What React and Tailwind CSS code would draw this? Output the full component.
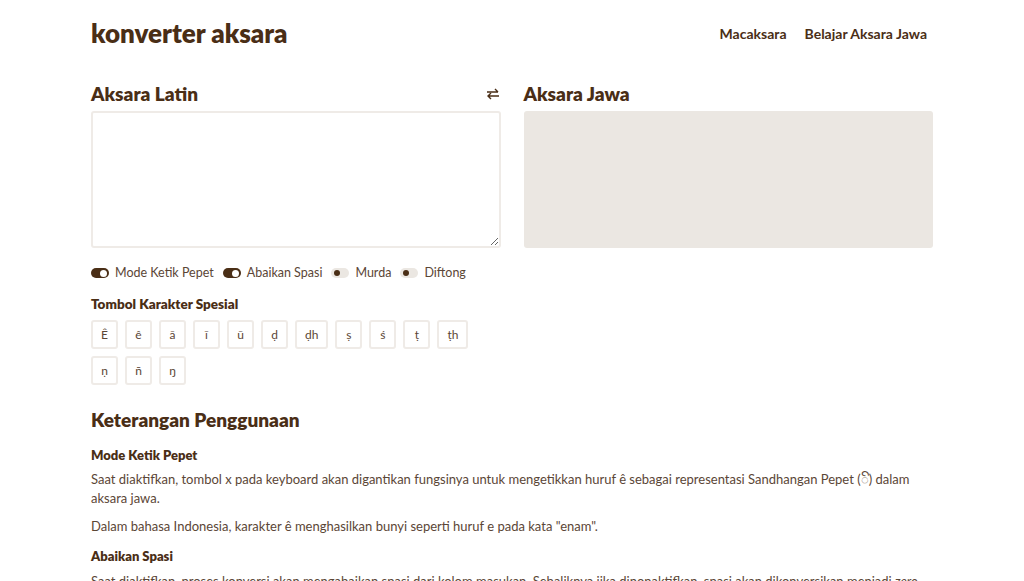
import { useState } from 'react';

const chars1 = ['Ê', 'ê', 'ā', 'ī', 'ū', 'ḍ', 'ḍh', 'ṣ', 'ś', 'ṭ', 'ṭh'];
const chars2 = ['ṇ', 'ñ', 'ŋ'];

function Toggle({ on, label }) {
    return (
        <label className="flex items-center gap-[6px] text-[12.5px] text-[#5b4636]">
            {on ? (
                <span className="w-[18px] h-[10px] rounded-full bg-[#4a2e16] flex items-center justify-end pr-[2px]">
                    <span className="w-[7px] h-[7px] rounded-full bg-white" />
                </span>
            ) : (
                <span className="w-[18px] h-[10px] rounded-full bg-[#ebe7e2] flex items-center pl-[3px]">
                    <span className="w-[6px] h-[6px] rounded-full bg-[#4a2e16]" />
                </span>
            )}
            {label}
        </label>
    );
}

function CharButton({ c }) {
    return (
        <button className="min-w-[27px] h-[29px] px-[8px] border-2 border-[#efebe7] rounded-[3px] bg-white text-[12px] text-[#5b4636]">
            {c}
        </button>
    );
}

export default function App() {
    const [text, setText] = useState('');

    return (
        <div className="min-h-screen bg-white font-['Lato',sans-serif] text-[#5b4636]">
            <div className="w-[842px] mx-auto">
                <header className="flex items-center justify-between pt-[17px] pb-[33px]">
                    <h1 className="text-[26px] font-extrabold text-[#4a2e16] leading-[32px]">konverter aksara</h1>
                    <nav className="flex gap-[18px] pr-[6px] text-[14px] font-bold text-[#4a2e16]">
                        <a href="#">Macaksara</a>
                        <a href="#">Belajar Aksara Jawa</a>
                    </nav>
                </header>

                <div className="grid grid-cols-2 gap-[23px]">
                    <div>
                        <div className="flex items-end justify-between h-[24px] mb-[5px]">
                            <h2 className="text-[19px] font-extrabold text-[#4a2e16] leading-[24px]">Aksara Latin</h2>
                            <svg width="14" height="12" viewBox="0 0 14 12" className="mr-[1px] mb-[6px] text-[#4a2e16]" fill="none" stroke="currentColor" strokeWidth="1.4">
                                <path d="M1 4h11M9 1l3 3" />
                                <path d="M13 8H2M5 5l-3 3 3 3" />
                            </svg>
                        </div>
                        <textarea
                            value={text}
                            onChange={(e) => setText(e.target.value)}
                            className="block w-full h-[137px] border-2 border-[#efebe7] rounded-[3px] p-2 focus:outline-none"
                        />
                    </div>
                    <div>
                        <div className="flex items-end h-[24px] mb-[5px]">
                            <h2 className="text-[19px] font-extrabold text-[#4a2e16] leading-[24px]">Aksara Jawa</h2>
                        </div>
                        <div className="h-[137px] bg-[#ebe7e2] rounded-[3px]" />
                    </div>
                </div>

                <div className="flex items-center gap-[9px] mt-[16px]">
                    <Toggle on label="Mode Ketik Pepet" />
                    <Toggle on label="Abaikan Spasi" />
                    <Toggle label="Murda" />
                    <Toggle label="Diftong" />
                </div>

                <h3 className="mt-[11px] text-[13.5px] font-extrabold text-[#4a2e16]">Tombol Karakter Spesial</h3>
                <div className="flex flex-wrap gap-[7px] mt-[6px] w-[400px]">
                    {chars1.map((c) => <CharButton key={c} c={c} />)}
                </div>
                <div className="flex gap-[7px] mt-[7px]">
                    {chars2.map((c) => <CharButton key={c} c={c} />)}
                </div>

                <h2 className="mt-[21px] text-[19px] font-extrabold text-[#4a2e16]">Keterangan Penggunaan</h2>

                <h4 className="mt-[11px] text-[13px] font-extrabold text-[#4a2e16]">Mode Ketik Pepet</h4>
                <p className="mt-[5px] text-[13px] leading-[19px]">
                    Saat diaktifkan, tombol x pada keyboard akan digantikan fungsinya untuk mengetikkan huruf ê sebagai representasi Sandhangan Pepet (ꦼ) dalam aksara jawa.
                </p>
                <p className="mt-[9px] text-[13px] leading-[19px]">
                    Dalam bahasa Indonesia, karakter ê menghasilkan bunyi seperti huruf e pada kata "enam".
                </p>

                <h4 className="mt-[11px] text-[13px] font-extrabold text-[#4a2e16]">Abaikan Spasi</h4>
                <p className="mt-[5px] text-[13px] leading-[19px]">
                    Saat diaktifkan, proses konversi akan mengabaikan spasi dari kolom masukan. Sebaliknya jika dinonaktifkan, spasi akan dikonversikan menjadi <i>zero width space</i>.
                </p>
            </div>
        </div>
    );
}
